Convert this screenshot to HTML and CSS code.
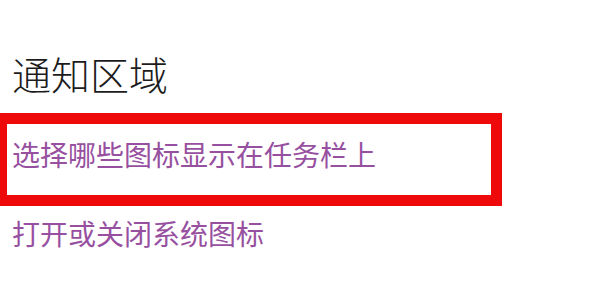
FILE: index.html
```html
<!DOCTYPE html>
<html lang="zh-CN">
<head>
<meta charset="utf-8">
<title>通知区域</title>
<link rel="stylesheet" href="styles.css">
</head>
<body>
<main class="page">
  <h1 class="title">通知区域</h1>
  <div class="highlight">
    <a class="link" href="#">选择哪些图标显示在任务栏上</a>
  </div>
  <a class="link link-second" href="#">打开或关闭系统图标</a>
</main>
</body>
</html>
```
FILE: styles.css
```css
html, body {
  margin: 0;
  padding: 0;
  background: #ffffff;
}
body {
  font-family: "Noto Sans CJK SC", "Noto Sans", sans-serif;
  width: 604px;
  height: 282px;
  overflow: hidden;
}
.page {
  display: flex;
  flex-direction: column;
  align-items: flex-start;
  padding-top: 54px;
}
.title {
  margin: 0 0 0 12px;
  font-size: 39px;
  line-height: 39px;
  font-weight: 300;
  color: #1c1c1c;
}
.highlight {
  margin-top: 20px;
  margin-left: -4px;
  width: 479px;
  border: 11px solid #ee0a0a;
  padding: 16px 0 27px 5px;
}
.link {
  display: block;
  font-size: 28px;
  line-height: 28px;
  color: #97509f;
  text-decoration: none;
}
.link-second {
  margin-top: 13px;
  margin-left: 12px;
}
```
